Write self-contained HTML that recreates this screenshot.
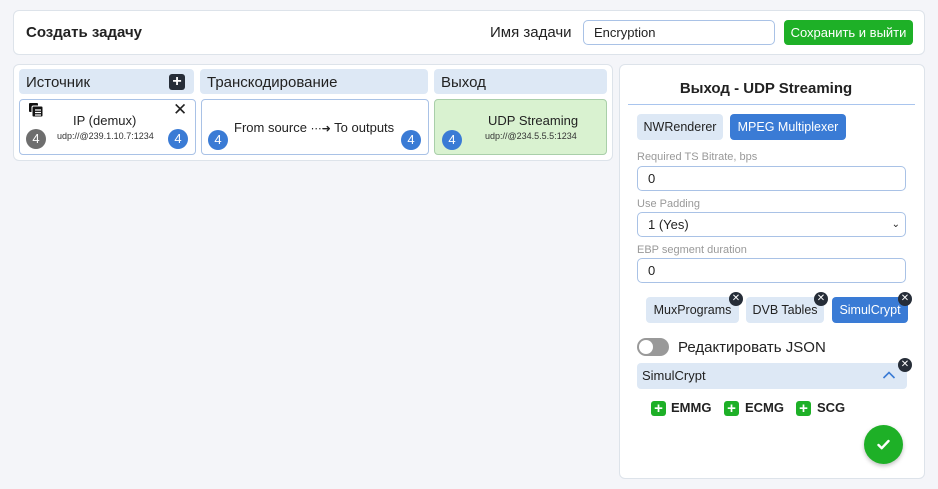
<!DOCTYPE html>
<html><head><meta charset="utf-8"><style>
*{box-sizing:border-box;margin:0;padding:0}
body{width:938px;height:489px;background:#f4f5f9;font-family:"Liberation Sans","DejaVu Sans",sans-serif;color:#222;position:relative;overflow:hidden}
.a{position:absolute}
.card{background:#fff;border:1px solid #dde3ea;border-radius:6px}
.hd{background:#dde8f5;border-radius:4px;font-size:15px;color:#222;padding-left:7px;line-height:27px}
.node{background:#fff;border:1px solid #a9c2e6;border-radius:4px}
.badge{width:20px;height:20px;border-radius:50%;color:#fff;font-size:13px;text-align:center;line-height:20px}
.inp{background:#fff;border:1px solid #a9c2e6;border-radius:5px;font-size:13px;padding-left:10px}
.lbl{font-size:11px;color:#999}
.tag{border-radius:4px;font-size:12.5px;text-align:center;line-height:26px;white-space:nowrap}
.x{width:14px;height:14px;border-radius:50%;background:#262d38;color:#fff;font-size:10px;line-height:14px;text-align:center;font-weight:bold}
.plus{width:15px;height:15px;background:#1eb027;border-radius:3px;color:#fff;font-weight:bold;font-size:15px;line-height:15px;text-align:center}
.add{font-size:13px;font-weight:bold;color:#222;line-height:16px}
</style></head><body>
<div class="a card" style="left:13px;top:10px;width:912px;height:45px"></div>
<div class="a" style="left:26px;top:24px;font-size:15px;font-weight:bold">Создать задачу</div>
<div class="a" style="left:490px;top:24px;font-size:15px">Имя задачи</div>
<div class="a inp" style="left:583px;top:20px;width:192px;height:25px;line-height:23px">Encryption</div>
<div class="a" style="left:784px;top:20px;width:129px;height:25px;background:#1eb027;border-radius:4px;color:#fff;font-size:13px;text-align:center;line-height:25px">Сохранить и выйти</div>

<div class="a card" style="left:13px;top:64px;width:600px;height:97px"></div>
<div class="a hd" style="left:19px;top:69px;width:175px;height:25px">Источник</div>
<div class="a" style="left:169px;top:74px;width:16px;height:16px;background:#262d38;border-radius:3px;color:#fff;font-weight:bold;text-align:center;line-height:16px;font-size:16px">+</div>
<div class="a hd" style="left:200px;top:69px;width:228px;height:25px">Транскодирование</div>
<div class="a hd" style="left:434px;top:69px;width:173px;height:25px">Выход</div>

<div class="a node" style="left:19px;top:99px;width:177px;height:56px"></div>
<svg class="a" style="left:28px;top:102px" width="16" height="16" viewBox="0 0 16 16"><rect x="1" y="1" width="9" height="9" rx="1" fill="#111"/><rect x="4" y="4" width="11" height="11" rx="1.5" fill="#111" stroke="#fff" stroke-width="1"/><path d="M7 8h6M7 10.5h6M7 13h6" stroke="#fff" stroke-width="1.2"/></svg>
<div class="a" style="left:173px;top:100px;font-size:17px">✕</div>
<div class="a" style="left:73px;top:113px;font-size:13px">IP (demux)</div>
<div class="a" style="left:57px;top:131px;font-size:9px;color:#333">udp://@239.1.10.7:1234</div>
<div class="a badge" style="left:26px;top:129px;background:#6e6e6e">4</div>
<div class="a badge" style="left:168px;top:129px;background:#3a7bd5">4</div>

<div class="a node" style="left:201px;top:99px;width:228px;height:56px"></div>
<div class="a" style="left:234px;top:120px;font-size:13px">From source <span style="font-size:11px">⋯➜</span> To outputs</div>
<div class="a badge" style="left:208px;top:130px;background:#3a7bd5">4</div>
<div class="a badge" style="left:401px;top:130px;background:#3a7bd5">4</div>

<div class="a" style="left:434px;top:99px;width:173px;height:56px;background:#d9f2d0;border:1px solid #a9cfa9;border-radius:4px"></div>
<div class="a" style="left:488px;top:113px;font-size:13px">UDP Streaming</div>
<div class="a" style="left:485px;top:131px;font-size:9px;color:#333">udp://@234.5.5.5:1234</div>
<div class="a badge" style="left:442px;top:130px;background:#3a7bd5">4</div>

<div class="a card" style="left:619px;top:64px;width:306px;height:415px"></div>
<div class="a" style="left:619px;top:80px;width:294px;text-align:center;font-size:15px;font-weight:bold">Выход - UDP Streaming</div>
<div class="a" style="left:628px;top:104px;width:287px;height:1px;background:#a9c5ee"></div>
<div class="a tag" style="left:637px;top:114px;width:86px;background:#dde8f5">NWRenderer</div>
<div class="a tag" style="left:730px;top:114px;width:116px;background:#3a7bd5;color:#fff">MPEG Multiplexer</div>
<div class="a lbl" style="left:637px;top:151px">Required TS Bitrate, bps</div>
<div class="a inp" style="left:637px;top:166px;width:269px;height:25px;line-height:23px">0</div>
<div class="a lbl" style="left:637px;top:198px">Use Padding</div>
<div class="a inp" style="left:637px;top:212px;width:269px;height:25px;line-height:23px">1 (Yes)<span style="position:absolute;right:5px;top:0;font-size:10px">&#8964;</span></div>
<div class="a lbl" style="left:637px;top:244px">EBP segment duration</div>
<div class="a inp" style="left:637px;top:258px;width:269px;height:25px;line-height:23px">0</div>

<div class="a tag" style="left:646px;top:297px;width:93px;background:#dde8f5">MuxPrograms</div>
<div class="a x" style="left:729px;top:292px">✕</div>
<div class="a tag" style="left:746px;top:297px;width:78px;background:#dde8f5">DVB Tables</div>
<div class="a x" style="left:814px;top:292px">✕</div>
<div class="a tag" style="left:832px;top:297px;width:76px;background:#3a7bd5;color:#fff">SimulCrypt</div>
<div class="a x" style="left:898px;top:292px">✕</div>

<div class="a" style="left:637px;top:338px;width:32px;height:18px;border-radius:9px;background:#999"></div>
<div class="a" style="left:639px;top:340px;width:14px;height:14px;border-radius:50%;background:#fff"></div>
<div class="a" style="left:678px;top:339px;font-size:15px">Редактировать JSON</div>

<div class="a" style="left:637px;top:363px;width:270px;height:26px;background:#dde8f5;border-radius:4px;font-size:13px;line-height:26px;padding-left:5px">SimulCrypt</div>
<svg class="a" style="left:882px;top:370px" width="14" height="10" viewBox="0 0 14 10"><path d="M1.5 8L7 2.5 12.5 8" stroke="#3a7bd5" stroke-width="1.6" fill="none"/></svg>
<div class="a x" style="left:898px;top:358px">✕</div>

<div class="a plus" style="left:651px;top:401px">+</div><div class="a add" style="left:671px;top:400px">EMMG</div>
<div class="a plus" style="left:724px;top:401px">+</div><div class="a add" style="left:745px;top:400px">ECMG</div>
<div class="a plus" style="left:796px;top:401px">+</div><div class="a add" style="left:817px;top:400px">SCG</div>

<div class="a" style="left:864px;top:425px;width:39px;height:39px;border-radius:50%;background:#1eb027;box-shadow:0 2px 4px rgba(0,0,0,.25)"></div>
<svg class="a" style="left:876px;top:437px" width="15" height="15" viewBox="0 0 15 15"><path d="M2.5 8l3.2 3.2L12.5 4" stroke="#fff" stroke-width="2.4" fill="none" stroke-linecap="round" stroke-linejoin="round"/></svg>
</body></html>
